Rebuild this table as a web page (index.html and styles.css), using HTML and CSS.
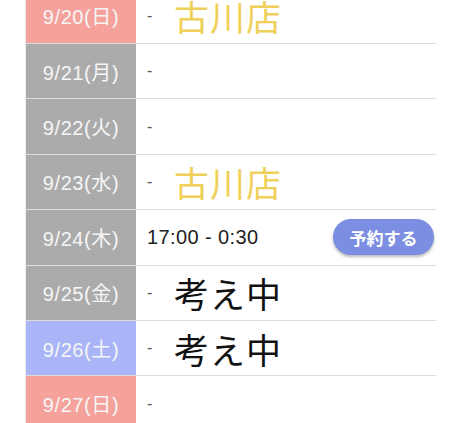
FILE: index.html
```html
<!DOCTYPE html>
<html lang="ja">
<head>
<meta charset="utf-8">
<link rel="stylesheet" href="styles.css">
</head>
<body>
<div class="schedule">
  <div class="row">
    <div class="date sun">9/20(日)</div>
    <div class="info"><span class="dash">-</span><span class="big shop">古川店</span></div>
  </div>
  <div class="row">
    <div class="date">9/21(月)</div>
    <div class="info"><span class="dash">-</span></div>
  </div>
  <div class="row">
    <div class="date">9/22(火)</div>
    <div class="info"><span class="dash">-</span></div>
  </div>
  <div class="row">
    <div class="date">9/23(水)</div>
    <div class="info"><span class="dash">-</span><span class="big shop">古川店</span></div>
  </div>
  <div class="row">
    <div class="date">9/24(木)</div>
    <div class="info"><span class="time">17:00 - 0:30</span><button class="reserve">予約する</button></div>
  </div>
  <div class="row">
    <div class="date">9/25(金)</div>
    <div class="info"><span class="dash">-</span><span class="big">考え中</span></div>
  </div>
  <div class="row">
    <div class="date sat">9/26(土)</div>
    <div class="info"><span class="dash">-</span><span class="big">考え中</span></div>
  </div>
  <div class="row">
    <div class="date sun">9/27(日)</div>
    <div class="info"><span class="dash">-</span></div>
  </div>
</div>
</body>
</html>
```

FILE: styles.css
```css
* { box-sizing: border-box; }
html, body {
  margin: 0;
  padding: 0;
  background: #fff;
  overflow: hidden;
}
body {
  font-family: "Liberation Sans", "Noto Sans CJK JP", sans-serif;
  color: #222;
}
.schedule {
  margin: -11.4px 0 0 25px;
  width: 411px;
  border-left: 1px solid #eee;
}
.row {
  display: flex;
  height: 55.4px;
  border-bottom: 1px solid #dcdcdc;
}
.date {
  width: 110px;
  flex: none;
  background: #ababab;
  color: #f6f6f6;
  font-size: 20px;
  letter-spacing: 0.6px;
  display: flex;
  align-items: center;
  justify-content: center;
}
.date.sun { background: #f5a29c; }
.date.sat { background: #a9b5f6; }
.info {
  flex: 1;
  display: flex;
  align-items: center;
  padding: 0 2px 0 11px;
}
.dash {
  font-size: 16px;
  color: #555;
  width: 27px;
  flex: none;
}
.big {
  font-family: "Noto Sans CJK JP", sans-serif;
  font-size: 35px;
  line-height: 1;
  color: #111;
  letter-spacing: 1px;
}
.big.shop { color: #efd05a; }
.time {
  font-size: 20px;
  letter-spacing: 0.4px;
  color: #222;
}
.reserve {
  margin-left: auto;
  width: 101px;
  height: 36px;
  border: none;
  border-radius: 18px;
  background: #7b8ee2;
  color: #fff;
  font-family: "Noto Sans CJK JP", sans-serif;
  font-size: 17px;
  font-weight: 700;
  box-shadow: 0 2px 3px rgba(0,0,0,0.28);
  padding: 0;
}
```
